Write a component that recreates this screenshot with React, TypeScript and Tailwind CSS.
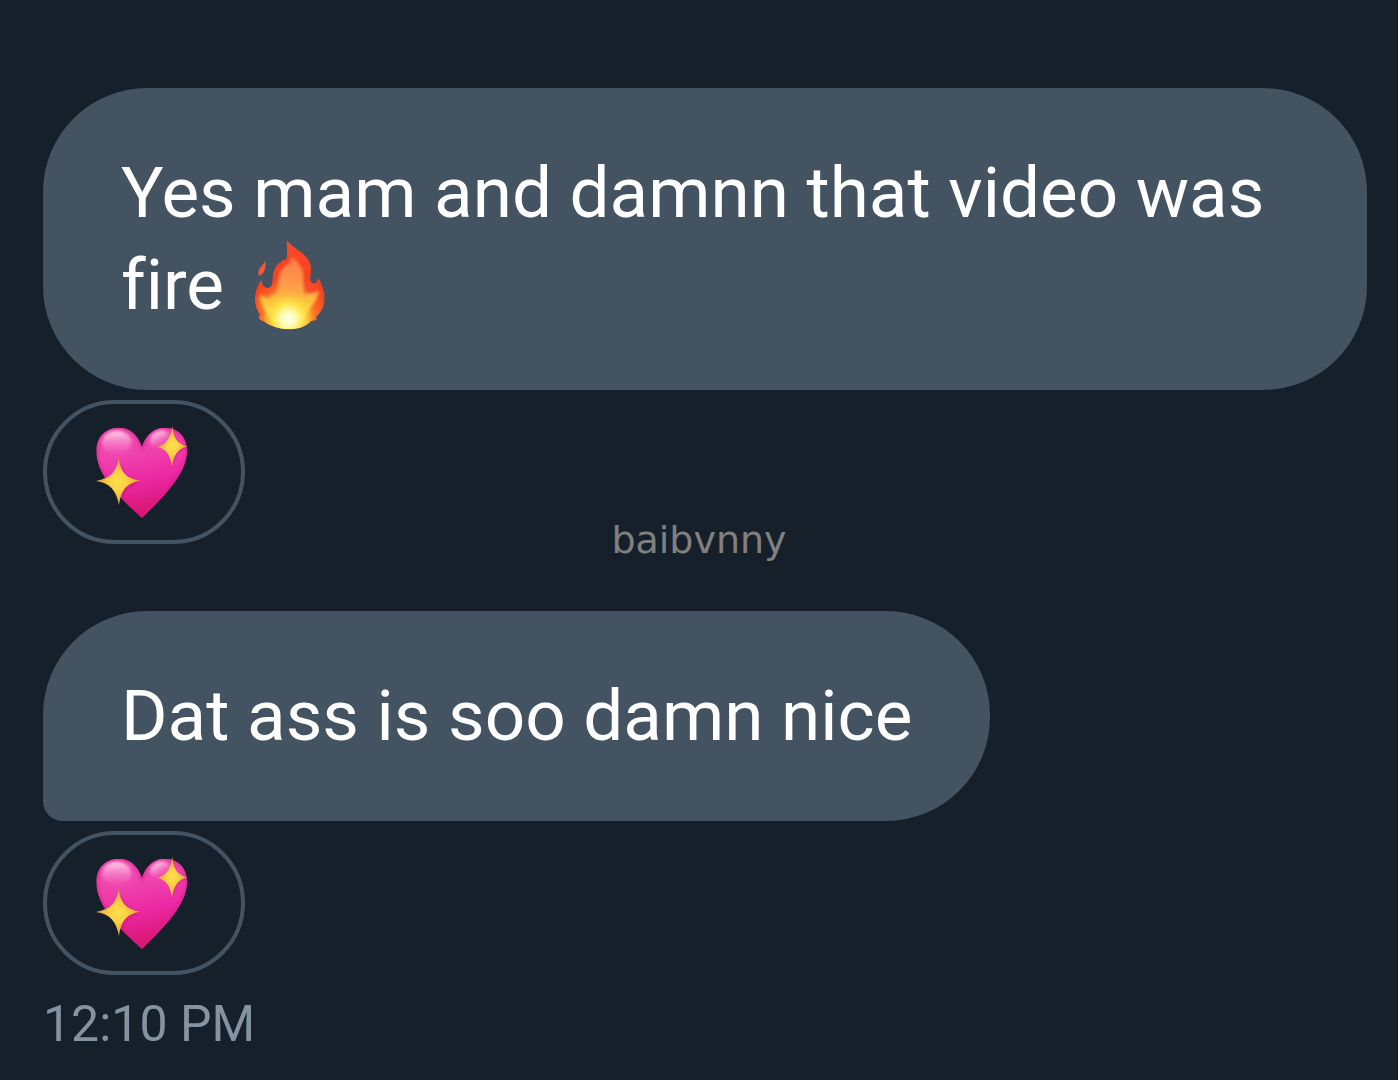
import { useId, type ReactNode } from 'react'
import { clsx } from 'clsx'

function FireEmoji() {
  return (
    <svg
      viewBox="75 27 216 273"
      role="img"
      aria-label="fire"
      className="-mt-5 -mb-2 ml-3 inline-block h-[91px] w-[72px] align-middle"
    >
      <defs>
        <radialGradient id="fire-outer" gradientUnits="userSpaceOnUse" cx="178" cy="262" r="225">
          <stop offset="0" stopColor="#ffd94a" />
          <stop offset="0.2" stopColor="#ffb52e" />
          <stop offset="0.38" stopColor="#fb6a26" />
          <stop offset="0.55" stopColor="#f6401f" />
          <stop offset="1" stopColor="#fb4b2b" />
        </radialGradient>
        <linearGradient id="fire-mid" x1="0" y1="0" x2="0" y2="1">
          <stop offset="0" stopColor="#ff7a4a" />
          <stop offset="0.4" stopColor="#ff9b48" />
          <stop offset="0.65" stopColor="#ffc83a" />
          <stop offset="1" stopColor="#ffe860" />
        </linearGradient>
        <radialGradient id="fire-core" gradientUnits="userSpaceOnUse" cx="178" cy="266" r="78">
          <stop offset="0" stopColor="#fffff0" />
          <stop offset="0.3" stopColor="#fffbb0" />
          <stop offset="0.6" stopColor="#ffe94a" stopOpacity="0.8" />
          <stop offset="1" stopColor="#ffd23a" stopOpacity="0" />
        </radialGradient>
        <filter id="fire-soft" x="-20%" y="-20%" width="140%" height="140%">
          <feGaussianBlur stdDeviation="5" />
        </filter>
        <clipPath id="fire-clip">
          <path d="M173 31C188 51 216 62 234 84C249 102 247 122 244 142C243 156 253 165 261 158C267 153 267 147 265 142C275 151 278 166 282 177C293 208 285 239 262 260L262 270L247 273C230 291 204 298 179 298C148 297 122 287 103 274L93 269C90 265 88 260 90 256L99 262C83 244 75 219 79 193C82 173 91 160 98 146C97 163 105 173 116 174C129 174 130 160 131 148C130 128 138 111 150 99L158 96L161 90L171 91C177 74 173 50 173 31Z" />
        </clipPath>
      </defs>
      <path d="M110 91C108 107 112 118 101 131L90 138C88 132 87 126 90 119C95 109 105 103 110 91Z" fill="#f45a35" />
      <g clipPath="url(#fire-clip)">
        <path d="M70 25H295V300H70Z" fill="url(#fire-outer)" />
        <path
          d="M188 80C205 92 222 112 224 139C224 162 220 177 237 188C249 192 263 186 270 181C267 208 249 226 239 240C225 262 210 290 179 300C149 291 126 270 111 246C99 230 91 214 94 191C107 209 132 203 143 181C151 154 146 128 165 112C177 102 187 96 188 80Z"
          fill="url(#fire-mid)"
          filter="url(#fire-soft)"
        />
        <path d="M226 132C233 142 232 162 226 175C219 187 226 195 238 191C253 187 264 176 269 166L262 154L248 160Z" fill="#f94b31" opacity="0.6" filter="url(#fire-soft)" />
        <circle cx="178" cy="266" r="78" fill="url(#fire-core)" />
      </g>
    </svg>
  )
}

function SparklingHeart() {
  const id = useId()
  return (
    <svg viewBox="165 92 282 282" aria-hidden="true" className="size-[94px]">
      <defs>
        <linearGradient id={`${id}-heart`} x1="0.35" y1="0" x2="0.55" y2="1">
          <stop offset="0" stopColor="#ef4fae" />
          <stop offset="0.3" stopColor="#ef43ae" />
          <stop offset="0.6" stopColor="#ec27a2" />
          <stop offset="1" stopColor="#d31368" />
        </linearGradient>
        <linearGradient id={`${id}-shine`} x1="0" y1="0" x2="0" y2="1">
          <stop offset="0" stopColor="#ffd9f0" stopOpacity="0.95" />
          <stop offset="1" stopColor="#f576c0" stopOpacity="0.1" />
        </linearGradient>
        <radialGradient id={`${id}-star`}>
          <stop offset="0" stopColor="#fde04c" />
          <stop offset="0.4" stopColor="#fbd045" />
          <stop offset="1" stopColor="#e59c3c" />
        </radialGradient>
        <filter id={`${id}-soft`} x="-20%" y="-20%" width="140%" height="140%">
          <feGaussianBlur stdDeviation="5" />
        </filter>
        <clipPath id={`${id}-clip`}>
          <path d="M306 158C317 122 341 100 375 100C415 100 441 129 441 169C441 237 373 305 306 371C241 311 169 244 169 169C169 129 197 100 236 100C270 100 293 121 306 158Z" />
        </clipPath>
      </defs>
      <g clipPath={`url(#${id}-clip)`}>
        <path d="M165 92H447V374H165Z" fill={`url(#${id}-heart)`} />
        <path
          d="M306 158C317 122 341 100 375 100C415 100 441 129 441 169C441 237 373 305 306 371C241 311 169 244 169 169C169 129 197 100 236 100C270 100 293 121 306 158Z"
          fill="none"
          stroke="#e01b8c"
          strokeWidth="9"
          opacity="0.7"
          filter={`url(#${id}-soft)`}
        />
        <ellipse cx="230" cy="145" rx="44" ry="36" fill={`url(#${id}-shine)`} filter={`url(#${id}-soft)`} />
        <ellipse cx="359" cy="132" rx="31" ry="22" transform="rotate(-28 359 132)" fill={`url(#${id}-shine)`} filter={`url(#${id}-soft)`} />
        <path
          d="M242 201C246 242 270 256 303 263C272 270 247 286 242 325ZM397 100C400 139 414 151 442 159C417 167 404 180 398 218Z"
          fill="#c8106f"
          opacity="0.5"
          filter={`url(#${id}-soft)`}
        />
      </g>
      <path d="M236 192C241 233 260 254 301 259C260 266 243 286 237 333C229 288 210 266 168 260C211 253 229 234 236 192Z" fill={`url(#${id}-star)`} />
      <path d="M397 95C400 130 412 149 441 156C413 165 402 180 396 216C389 181 381 166 353 157C381 149 391 132 397 95Z" fill={`url(#${id}-star)`} />
    </svg>
  )
}

function Bubble({ children, tail = false }: { children: ReactNode; tail?: boolean }) {
  return (
    <p
      className={clsx(
        'w-fit rounded-[104px] bg-[#435362] px-[78px] py-[59px] text-[71px] leading-[92px] text-white [font-variant-ligatures:none]',
        tail && 'rounded-bl-[20px]',
      )}
    >
      {children}
    </p>
  )
}

function Reaction() {
  return (
    <button
      type="button"
      aria-label="Sparkling heart reaction"
      className="mt-2.5 block cursor-pointer rounded-[72px] border-4 border-[#435362] py-[21px] pr-[52px] pl-12"
    >
      <SparklingHeart />
    </button>
  )
}

export default function App() {
  return (
    <main className="relative min-h-screen bg-[#16202a] pt-[88px] pr-[31px] pl-[43px] font-['Roboto',sans-serif]">
      <section>
        <Bubble>
          Yes mam and damnn that video was fire <FireEmoji />
        </Bubble>
        <Reaction />
      </section>
      <section className="mt-[67px]">
        <Bubble tail>Dat ass is soo damn nice</Bubble>
        <Reaction />
      </section>
      <time className="mt-4 block text-[50px] leading-[66px] text-[#8493a1]">12:10 PM</time>
      <div className="pointer-events-none absolute inset-0 flex items-center justify-center font-['DejaVu_Sans',sans-serif] text-[38px] text-[#808080]">
        baibvnny
      </div>
    </main>
  )
}
